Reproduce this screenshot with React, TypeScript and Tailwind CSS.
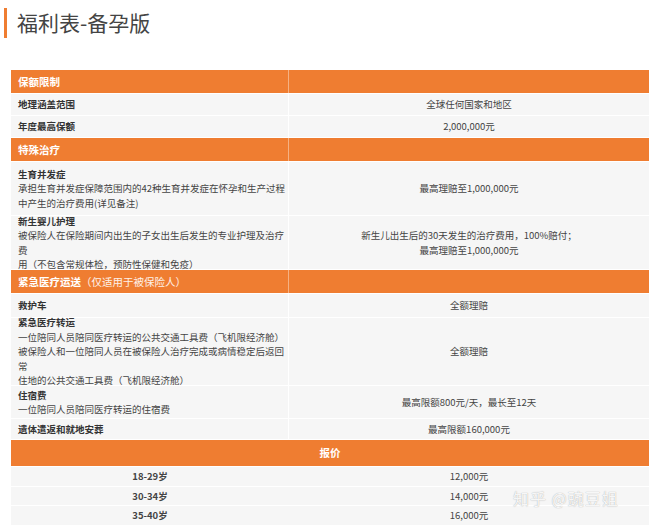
const font = { fontFamily: '"Noto Sans CJK SC", "Noto Sans", sans-serif' };

function Head({ label, sub }: { label: string; sub?: string }) {
  return (
    <div className="flex h-[24px] border-b border-white bg-[#ef7d31] text-[10.5px] font-bold text-white">
      <div className="flex w-[278px] items-center border-r border-white/40 pl-[7px]">
        {label}
        {sub && <span className="font-normal text-white/90">{sub}</span>}
      </div>
      <div className="flex-1" />
    </div>
  );
}

function Row({ h, title, lines = [], value }: { h: number; title: string; lines?: string[]; value: string[] }) {
  return (
    <div className="flex border-b border-white bg-[#f6f6f6] text-[9.5px] leading-[14.5px] text-[#333]" style={{ height: h }}>
      <div className="flex w-[278px] flex-col justify-center border-r border-white pl-[7px]">
        <div className="font-bold">{title}</div>
        {lines.map((l) => (
          <div key={l} className="text-[#444]">{l}</div>
        ))}
      </div>
      <div className="flex flex-1 flex-col items-center justify-center text-[#444]">
        {value.map((v) => (
          <div key={v}>{v}</div>
        ))}
      </div>
    </div>
  );
}

function Price({ age, price }: { age: string; price: string }) {
  return (
    <div className="flex h-[19.5px] border-b border-white bg-[#f6f6f6] text-[9.5px] text-[#444]">
      <div className="flex w-[278px] items-center justify-center font-bold">{age}</div>
      <div className="flex flex-1 items-center justify-center">{price}</div>
    </div>
  );
}

export default function App() {
  return (
    <div className="relative h-[529px] w-[654px] overflow-hidden bg-white" style={font}>
      <div className="ml-[4px] mt-[8px] flex h-[30px] items-center border-l-[3px] border-[#ef7d31] pl-[10px] text-[21px] text-[#444]">
        福利表-备孕版
      </div>
      <div className="ml-[11px] mt-[32px] w-[638px]">
        <Head label="保额限制" />
        <Row h={22} title="地理涵盖范围" value={["全球任何国家和地区"]} />
        <Row h={22} title="年度最高保额" value={["2,000,000元"]} />
        <Head label="特殊治疗" />
        <Row h={54} title="生育并发症" lines={["承担生育并发症保障范围内的42种生育并发症在怀孕和生产过程", "中产生的治疗费用(详见备注)"]} value={["最高理赔至1,000,000元"]} />
        <Row h={54} title="新生婴儿护理" lines={["被保险人在保险期间内出生的子女出生后发生的专业护理及治疗费", "用（不包含常规体检，预防性保健和免疫）"]} value={["新生儿出生后的30天发生的治疗费用，100%赔付；", "最高理赔至1,000,000元"]} />
        <Head label="紧急医疗运送" sub="（仅适用于被保险人）" />
        <Row h={24} title="救护车" value={["全额理赔"]} />
        <Row h={68} title="紧急医疗转运" lines={["一位陪同人员陪同医疗转运的公共交通工具费（飞机限经济舱）", "被保险人和一位陪同人员在被保险人治疗完成或病情稳定后返回常", "住地的公共交通工具费（飞机限经济舱）"]} value={["全额理赔"]} />
        <Row h={33} title="住宿费" lines={["一位陪同人员陪同医疗转运的住宿费"]} value={["最高限额800元/天，最长至12天"]} />
        <Row h={21} title="遗体遣返和就地安葬" value={["最高限额160,000元"]} />
        <div className="flex h-[27px] items-center justify-center border-b border-white bg-[#ef7d31] text-[10.5px] font-bold text-white">
          报价
        </div>
        <Price age="18-29岁" price="12,000元" />
        <Price age="30-34岁" price="14,000元" />
        <Price age="35-40岁" price="16,000元" />
      </div>
      <div className="absolute left-[513px] top-[486px] text-[16px] tracking-[1px] text-white/90" style={{ textShadow: "0 0 1px #999" }}>
        知乎 @豌豆姐
      </div>
    </div>
  );
}
